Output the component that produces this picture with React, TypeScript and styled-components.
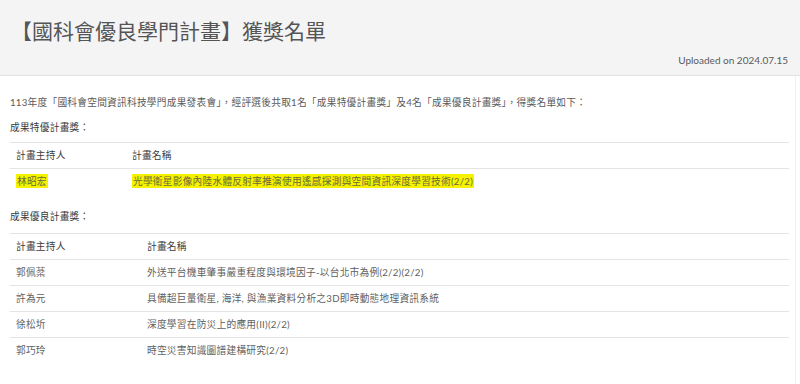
import styled, { createGlobalStyle } from 'styled-components';

const GlobalStyle = createGlobalStyle`
  body {
    margin: 0;
    background: #fff;
    font-family: Lato, "Noto Sans CJK TC", sans-serif;
    color: #5a5a5a;
  }
`;

const Page = styled.div`
  width: 800px;
  height: 384px;
  overflow: hidden;
`;

const Header = styled.header`
  height: 76px;
  box-sizing: border-box;
  background: #f4f4f4;
  border-bottom: 1px solid #e2e2e2;
  padding: 16px 12px 0 11px;
  display: flex;
  flex-direction: column;
`;

const Title = styled.h1`
  margin: 0;
  font-size: 21px;
  font-weight: 400;
  line-height: 30px;
  color: #555;
`;

const Uploaded = styled.div`
  align-self: flex-end;
  margin-top: 7px;
  font-size: 10px;
  line-height: 14px;
  color: #5a5a5a;
`;

const Body = styled.main`
  margin-right: 4px;
  border-right: 1px solid #f0f0f0;
  padding: 18px 6px 0 10px;
  height: 308px;
  box-sizing: border-box;
  letter-spacing: 0.25px;
`;

const Intro = styled.p`
  margin: 0;
  font-size: 9.7px;
  line-height: 16px;
  color: #5a5a5a;
`;

const SectionTitle = styled.p<{ $top: number }>`
  margin: ${(p) => p.$top}px 0 0;
  font-size: 9.7px;
  line-height: 16px;
  font-weight: 400;
  color: #3a3a3a;
`;

const Table = styled.table<{ $top: number }>`
  width: 779px;
  margin-top: ${(p) => p.$top}px;
  border-collapse: collapse;
  table-layout: fixed;
  font-size: 9.7px;

  th,
  td {
    text-align: left;
    padding: 5px 6px;
    line-height: 15px;
    border-top: 1px solid #e4e4e4;
    white-space: nowrap;
  }

  th {
    font-weight: 400;
    color: #3a3a3a;
    border-bottom: 1px solid #e4e4e4;
  }

  td {
    color: #5f5f5f;
  }
`;

const Mark = styled.mark`
  background: #f6f200;
  color: #6a6a3a;
  padding: 1px 1px;
`;

type Award = { host: string; title: string; marked?: boolean };

const topAward: Award[] = [
  {
    host: '林昭宏',
    title: '光學衛星影像內陸水體反射率推演使用遙感探測與空間資訊深度學習技術(2/2)',
    marked: true,
  },
];

const goodAwards: Award[] = [
  { host: '郭佩棻', title: '外送平台機車肇事嚴重程度與環境因子-以台北市為例(2/2)(2/2)' },
  { host: '許為元', title: '具備超巨量衛星, 海洋, 與漁業資料分析之3D即時動態地理資訊系統' },
  { host: '徐松圻', title: '深度學習在防災上的應用(II)(2/2)' },
  { host: '郭巧玲', title: '時空災害知識圖譜建構研究(2/2)' },
];

function AwardTable({ rows, firstCol, top }: { rows: Award[]; firstCol: number; top: number }) {
  return (
    <Table $top={top}>
      <colgroup>
        <col style={{ width: firstCol }} />
        <col />
      </colgroup>
      <thead>
        <tr>
          <th>計畫主持人</th>
          <th>計畫名稱</th>
        </tr>
      </thead>
      <tbody>
        {rows.map((r) => (
          <tr key={r.host}>
            <td>{r.marked ? <Mark>{r.host}</Mark> : r.host}</td>
            <td>{r.marked ? <Mark>{r.title}</Mark> : r.title}</td>
          </tr>
        ))}
      </tbody>
    </Table>
  );
}

export default function App() {
  return (
    <Page>
      <GlobalStyle />
      <Header>
        <Title>【國科會優良學門計畫】獲獎名單</Title>
        <Uploaded>Uploaded on 2024.07.15</Uploaded>
      </Header>
      <Body>
        <Intro>
          113年度「國科會空間資訊科技學門成果發表會」，經評選後共取1名「成果特優計畫獎」及4名「成果優良計畫獎」，得獎名單如下：
        </Intro>
        <SectionTitle $top={9}>成果特優計畫獎：</SectionTitle>
        <AwardTable rows={topAward} firstCol={116} top={7} />
        <SectionTitle $top={14}>成果優良計畫獎：</SectionTitle>
        <AwardTable rows={goodAwards} firstCol={131} top={9} />
      </Body>
    </Page>
  );
}
